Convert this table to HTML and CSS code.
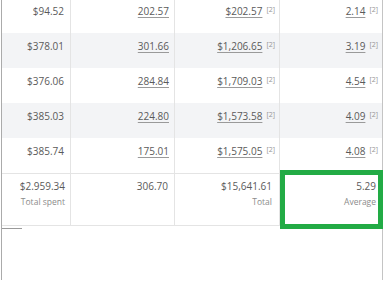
FILE: index.html
```html
<!DOCTYPE html>
<html>
<head>
<meta charset="utf-8">
<link rel="stylesheet" href="styles.css">
</head>
<body>
<div class="frame">
  <div class="table">
    <div class="row">
      <div class="cell">$94.52</div>
      <div class="cell"><span class="link">202.57</span></div>
      <div class="cell"><span class="link">$202.57</span><sup class="ref">[2]</sup></div>
      <div class="cell"><span class="link">2.14</span><sup class="ref">[2]</sup></div>
    </div>
    <div class="row">
      <div class="cell">$378.01</div>
      <div class="cell"><span class="link">301.66</span></div>
      <div class="cell"><span class="link">$1,206.65</span><sup class="ref">[2]</sup></div>
      <div class="cell"><span class="link">3.19</span><sup class="ref">[2]</sup></div>
    </div>
    <div class="row">
      <div class="cell">$376.06</div>
      <div class="cell"><span class="link">284.84</span></div>
      <div class="cell"><span class="link">$1,709.03</span><sup class="ref">[2]</sup></div>
      <div class="cell"><span class="link">4.54</span><sup class="ref">[2]</sup></div>
    </div>
    <div class="row">
      <div class="cell">$385.03</div>
      <div class="cell"><span class="link">224.80</span></div>
      <div class="cell"><span class="link">$1,573.58</span><sup class="ref">[2]</sup></div>
      <div class="cell"><span class="link">4.09</span><sup class="ref">[2]</sup></div>
    </div>
    <div class="row">
      <div class="cell">$385.74</div>
      <div class="cell"><span class="link">175.01</span></div>
      <div class="cell"><span class="link">$1,575.05</span><sup class="ref">[2]</sup></div>
      <div class="cell"><span class="link">4.08</span><sup class="ref">[2]</sup></div>
    </div>
    <div class="row total">
      <div class="cell">$2.959.34<span class="label">Total spent</span></div>
      <div class="cell">306.70</div>
      <div class="cell">$15,641.61<span class="label">Total</span></div>
      <div class="cell highlight">5.29<span class="label">Average</span></div>
    </div>
  </div>
  <div class="rule"></div>
</div>
</body>
</html>
```
FILE: styles.css
```css
html, body {
  margin: 0;
  padding: 0;
  background: #ffffff;
}
body {
  font-family: "Open Sans", "Noto Sans", sans-serif;
  color: #5a5a5a;
}
.frame {
  margin-left: 1px;
  width: 380px;
  min-height: 282px;
  border-left: 1px solid #ababab;
  border-right: 1px solid #c4c4c4;
}
.table {
  margin-top: -2px;
}
.row {
  display: grid;
  grid-template-columns: 69px 104px 105px 102px;
  height: 35px;
}
.row:nth-child(even) {
  background: #f3f4f6;
}
.cell {
  box-sizing: border-box;
  border-right: 1px solid #e4e4e4;
  padding: 6px 5px 0 0;
  text-align: right;
  font-size: 10px;
  line-height: 14px;
  white-space: nowrap;
}
.cell:first-child {
  padding-right: 6px;
}
.cell:nth-child(3),
.cell:nth-child(4) {
  padding-right: 4px;
}
.cell:last-child {
  border-right: 0;
}
.link {
  text-decoration: underline;
  text-decoration-color: #9a9a9a;
  text-underline-offset: 2px;
  text-decoration-thickness: 1px;
}
.ref {
  font-size: 7px;
  line-height: 1;
  margin-left: 4px;
  vertical-align: 3px;
  color: #959595;
}
.total {
  height: 51px;
  background: #ffffff;
  border-top: 1px solid #e4e4e4;
  border-bottom: 1px solid #e4e4e4;
}
.row.total:nth-child(even) {
  background: #ffffff;
}
.total .cell {
  padding-top: 5px;
}
.total .cell:first-child {
  padding-right: 5px;
}
.total .cell:nth-child(2) {
  padding-right: 6px;
}
.total .cell:nth-child(3) {
  padding-right: 7px;
}
.total .cell:nth-child(4) {
  padding-right: 6px;
}
.label {
  display: block;
  font-size: 8.5px;
  line-height: 11px;
  color: #8c8c8c;
  margin-top: 3px;
}
.highlight {
  position: relative;
}
.highlight::after {
  content: "";
  position: absolute;
  top: -4px;
  bottom: -4px;
  left: 0;
  right: -1px;
  border: 5px solid #22ab45;
}
.rule {
  width: 20px;
  height: 1px;
  margin-top: 2px;
  background: #9a9a9a;
}
```
